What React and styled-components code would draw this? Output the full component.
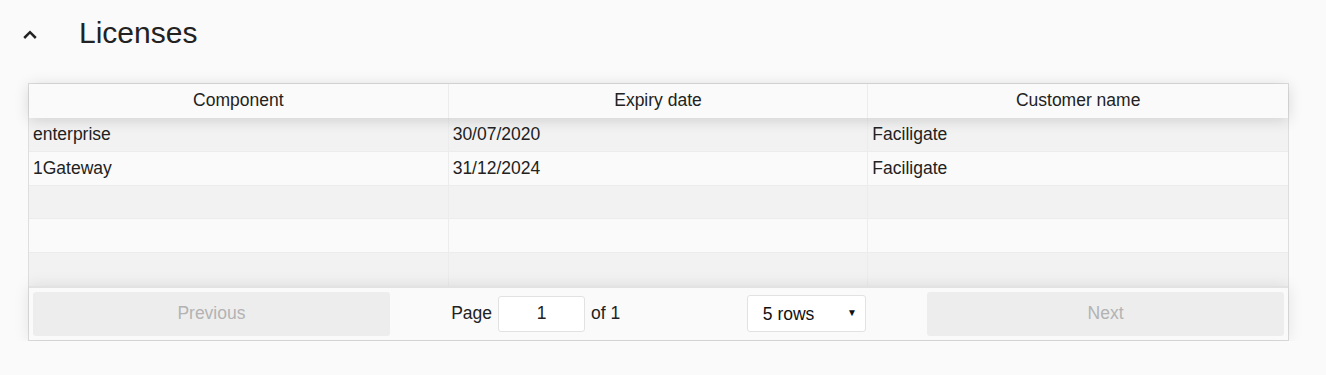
import React, { useState } from "react";
import styled, { createGlobalStyle } from "styled-components";

const licenses = [
  { component: "enterprise", expiry: "30/07/2020", customer: "Faciligate" },
  { component: "1Gateway", expiry: "31/12/2024", customer: "Faciligate" },
];

const columns = [
  { key: "component", title: "Component" },
  { key: "expiry", title: "Expiry date" },
  { key: "customer", title: "Customer name" },
];

const PAGE_SIZE = 5;

const App = () => {
  const [open, setOpen] = useState(true);
  const [size, setSize] = useState(PAGE_SIZE);
  const rows = [...licenses];
  while (rows.length < size) rows.push(null);

  return (
    <Page>
      <GlobalStyle />
      <SectionHead>
        <Toggle onClick={() => setOpen(!open)}>
          <svg width="28" height="28" viewBox="0 0 28 28">
            <polyline
              points="8.2,19 14,13.2 19.8,19"
              fill="none"
              stroke="#222"
              strokeWidth="2.5"
            />
          </svg>
        </Toggle>
        <Title>Licenses</Title>
      </SectionHead>

      {open && (
        <Table>
          <HeadRow>
            {columns.map((c) => (
              <Th key={c.key}>{c.title}</Th>
            ))}
          </HeadRow>
          <Body>
            {rows.map((r, i) => (
              <Row key={i} odd={i % 2 === 0}>
                {columns.map((c) => (
                  <Td key={c.key}>{r ? r[c.key] : "\u00a0"}</Td>
                ))}
              </Row>
            ))}
          </Body>
          <Pagination>
            <Side>
              <PageButton disabled>Previous</PageButton>
            </Side>
            <Center>
              <PageInfo>
                Page
                <PageJump type="text" defaultValue="1" />
                of 1
              </PageInfo>
              <SelectWrap>
                <Select value={size} onChange={(e) => setSize(+e.target.value)}>
                  {[5, 10, 20].map((n) => (
                    <option key={n} value={n}>
                      {n} rows
                    </option>
                  ))}
                </Select>
                <Arrow>▼</Arrow>
              </SelectWrap>
            </Center>
            <Side>
              <PageButton disabled>Next</PageButton>
            </Side>
          </Pagination>
        </Table>
      )}
    </Page>
  );
};

export default App;

const GlobalStyle = createGlobalStyle`
  body {
    margin: 0;
    background: #fafafa;
    font-family: "Liberation Sans", Arial, sans-serif;
    color: #222;
  }
`;

const Page = styled.div`
  padding: 0 37px 0 18px;
`;

const SectionHead = styled.div`
  display: flex;
  align-items: center;
  height: 66px;
`;

const Toggle = styled.div`
  display: flex;
  width: 28px;
  height: 28px;
  margin-left: -2px;
  cursor: pointer;
`;

const Title = styled.h2`
  margin: 0 0 0 35px;
  font-size: 30px;
  font-weight: 400;
  color: #222;
`;

const Table = styled.div`
  margin: 17px 0 0 10px;
  border: 1px solid #dedede;
  display: flex;
  flex-direction: column;
  font-size: 17.5px;
`;

const HeadRow = styled.div`
  display: grid;
  grid-template-columns: repeat(3, 1fr);
  position: relative;
  z-index: 1;
  box-shadow: 0 2px 15px 0 rgba(0, 0, 0, 0.15);
  background: #fafafa;
`;

const Th = styled.div`
  padding: 7px 5px 8px;
  line-height: 19px;
  text-align: center;
  border-right: 1px solid #ececec;
  &:last-child {
    border-right: none;
  }
`;

const Body = styled.div`
  display: flex;
  flex-direction: column;
`;

const Row = styled.div`
  display: grid;
  grid-template-columns: repeat(3, 1fr);
  background: ${(p) => (p.odd ? "#f2f2f2" : "#fafafa")};
  border-bottom: 1px solid #ececec;
  &:last-child {
    border-bottom: none;
  }
`;

const Td = styled.div`
  padding: 7px 4px;
  line-height: 18.8px;
  border-right: 1px solid #ececec;
  &:last-child {
    border-right: none;
  }
`;

const Pagination = styled.div`
  display: flex;
  align-items: stretch;
  padding: 3px;
  border-top: 2px solid #e2e2e2;
  box-shadow: 0 0 15px 0 rgba(0, 0, 0, 0.1);
  position: relative;
  z-index: 1;
  background: #fafafa;
`;

const Side = styled.div`
  flex: 1;
  display: flex;
  padding: 1px;
`;

const PageButton = styled.button`
  flex: 1;
  height: 44px;
  border: none;
  border-radius: 3px;
  background: #ededed;
  color: #b3b3b3;
  font-family: inherit;
  font-size: 17.5px;
  cursor: not-allowed;
`;

const Center = styled.div`
  flex: 1.5;
  display: flex;
  align-items: center;
  justify-content: space-around;
`;

const PageInfo = styled.div`
  display: flex;
  align-items: center;
  gap: 6px;
  white-space: nowrap;
`;

const PageJump = styled.input`
  width: 87px;
  height: 36px;
  box-sizing: border-box;
  border: 1px solid #e2e2e2;
  border-radius: 3px;
  background: #fff;
  text-align: center;
  font-family: inherit;
  font-size: 17.5px;
  color: #222;
  outline: none;
`;

const SelectWrap = styled.div`
  position: relative;
  margin-left: 6px;
`;

const Select = styled.select`
  appearance: none;
  width: 119px;
  height: 37px;
  padding: 0 28px 0 15px;
  border: 1px solid #e2e2e2;
  border-radius: 3px;
  background: #fff;
  font-family: inherit;
  font-size: 17.5px;
  color: #111;
  outline: none;
`;

const Arrow = styled.span`
  position: absolute;
  right: 9px;
  top: 12px;
  font-size: 10px;
  color: #111;
  pointer-events: none;
`;
